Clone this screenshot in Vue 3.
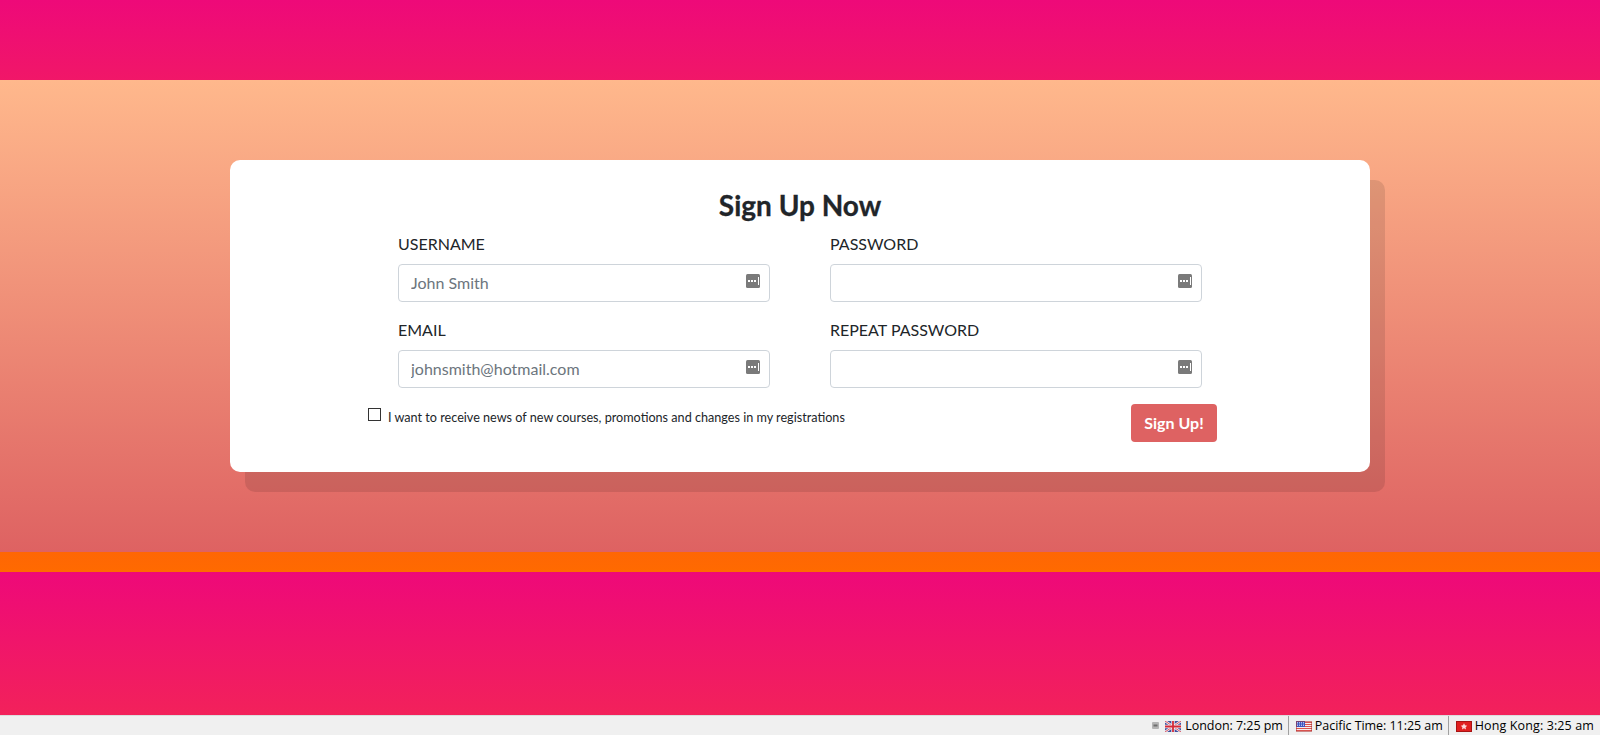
<template>
  <div class="page">
    <section class="hero">
      <form class="card" @submit.prevent>
        <h1 class="title">Sign Up Now</h1>
        <div class="fields">
          <div v-for="field in fields" :key="field.label" class="field">
            <label class="label">{{ field.label }}</label>
            <div class="input-wrap">
              <input class="input" :type="field.type" :placeholder="field.placeholder" />
              <svg class="key-icon" width="14" height="14" viewBox="0 0 14 14">
                <rect width="14" height="14" rx="1.5" fill="#7a7a7a" />
                <rect x="2" y="6" width="2" height="2" fill="#fff" />
                <rect x="5" y="6" width="2" height="2" fill="#fff" />
                <rect x="8" y="6" width="2" height="2" fill="#fff" />
                <rect x="12" y="3" width="1" height="8" fill="#fff" />
              </svg>
            </div>
          </div>
        </div>
        <div class="actions">
          <label class="news">
            <input class="check" type="checkbox" />
            <span>I want to receive news of new courses, promotions and changes in my registrations</span>
          </label>
          <button class="submit" type="submit">Sign Up!</button>
        </div>
      </form>
    </section>
    <footer class="statusbar">
      <svg class="collapse" width="7" height="7" viewBox="0 0 7 7">
        <rect width="7" height="7" rx="1" fill="#b4b4b4" />
        <rect x="1.5" y="2.5" width="4" height="2" fill="#6e6e6e" />
      </svg>
      <div v-for="clock in clocks" :key="clock.name" class="clock" :class="'clock-' + clock.flag">
        <svg v-if="clock.flag === 'uk'" class="flag" width="16" height="11" viewBox="0 0 16 11">
          <rect width="16" height="11" fill="#3f4f9e" />
          <path d="M0 0L16 11M16 0L0 11" stroke="#eeeef4" stroke-width="2.4" />
          <path d="M0 0L16 11M16 0L0 11" stroke="#d8434f" stroke-width="0.9" />
          <path d="M8 0V11M0 5.5H16" stroke="#eeeef4" stroke-width="3.4" />
          <path d="M8 0V11M0 5.5H16" stroke="#d42a38" stroke-width="1.8" />
        </svg>
        <svg v-else-if="clock.flag === 'us'" class="flag" width="16" height="11" viewBox="0 0 16 11">
          <rect width="16" height="11" fill="#f6eeee" />
          <path d="M0 1.5H16M0 3.5H16M0 5.5H16M0 7.5H16M0 9.5H16" stroke="#d9534f" stroke-width="1" />
          <rect width="9" height="6" fill="#3d56c0" />
          <path d="M1 1.5H8M1 3H8M1 4.5H8" stroke="#d5dcf6" stroke-width="0.8" stroke-dasharray="1 1" />
          <rect x="0.5" y="0.5" width="15" height="10" fill="none" stroke="#a33" stroke-opacity="0.55" />
        </svg>
        <svg v-else class="flag" width="16" height="11" viewBox="0 0 16 11">
          <rect width="16" height="11" fill="#e02020" />
          <rect x="0.5" y="0.5" width="15" height="10" fill="none" stroke="#a81414" />
          <path d="M8 2.2L9 4.3L11.2 4.7L9.6 6.2L10 8.4L8 7.3L6 8.4L6.4 6.2L4.8 4.7L7 4.3Z" fill="#fbdada" />
        </svg>
        <span>{{ clock.name }}: {{ clock.time }}</span>
      </div>
    </footer>
  </div>
</template>

<script setup>
const fields = [
  { label: "USERNAME", type: "text", placeholder: "John Smith" },
  { label: "PASSWORD", type: "password", placeholder: "" },
  { label: "EMAIL", type: "email", placeholder: "johnsmith@hotmail.com" },
  { label: "REPEAT PASSWORD", type: "password", placeholder: "" },
];

const clocks = [
  { name: "London", time: "7:25 pm", flag: "uk" },
  { name: "Pacific Time", time: "11:25 am", flag: "us" },
  { name: "Hong Kong", time: "3:25 am", flag: "hk" },
];
</script>

<style scoped>
.page {
  height: 735px;
  box-sizing: border-box;
  padding-top: 80px;
  display: flex;
  flex-direction: column;
  justify-content: space-between;
  font-family: Lato, "Liberation Sans", sans-serif;
  overflow: hidden;
  background: linear-gradient(#ee0979, #ff6a00) 0 0 / 100% 572px repeat-y;
}

.hero {
  height: 472px;
  flex-shrink: 0;
  padding: 80px 230px 0;
  box-sizing: border-box;
  background: linear-gradient(#ffb88c, #de6262);
}

.card {
  height: 312px;
  box-sizing: border-box;
  padding: 28px 168px 0;
  background: #fff;
  border-radius: 10px;
  box-shadow: 15px 20px 0 rgba(0, 0, 0, 0.1);
}

.title {
  margin: 0 0 10px;
  font-size: 28px;
  line-height: 34px;
  font-weight: 700;
  text-align: center;
  color: #212529;
  -webkit-text-stroke: 0.3px #212529;
}

.fields {
  display: grid;
  grid-template-columns: 372px 372px;
  column-gap: 60px;
  row-gap: 16px;
}

.label {
  display: block;
  margin-bottom: 8px;
  font-size: 16px;
  line-height: 24px;
  color: #212529;
}

.input-wrap {
  position: relative;
}

.input {
  display: block;
  width: 100%;
  height: 38px;
  box-sizing: border-box;
  padding: 5px 12px 7px;
  font: 16px/24px Lato, "Liberation Sans", sans-serif;
  color: #495057;
  background: #fff;
  border: 1px solid #ced4da;
  border-radius: 4px;
  outline: none;
}

.input::placeholder {
  color: #6c757d;
  opacity: 1;
}

.key-icon {
  position: absolute;
  top: 10px;
  right: 10px;
}

.actions {
  display: flex;
  justify-content: space-between;
  align-items: flex-start;
  margin: 16px -15px 0 -30px;
}

.news {
  display: flex;
  align-items: flex-start;
  gap: 7px;
  font-size: 12.64px;
  line-height: 20px;
  color: #212529;
}

.check {
  appearance: none;
  width: 13px;
  height: 13px;
  margin: 4px 0 0;
  box-sizing: border-box;
  border: 1px solid #333;
  background: #fff;
}

.news span {
  margin-top: 4px;
}

.submit {
  width: 86px;
  height: 38px;
  padding: 0 0 2px;
  font: 700 16px Lato, "Liberation Sans", sans-serif;
  color: #fff;
  background: #de6262;
  border: none;
  border-radius: 4px;
}

.statusbar {
  height: 20px;
  flex-shrink: 0;
  display: flex;
  justify-content: flex-end;
  align-items: center;
  background: #f0f0f0;
  border-top: 1px solid #dcdcdc;
  box-sizing: border-box;
  font: 12.5px "Open Sans", "DejaVu Sans", sans-serif;
  color: #000;
}

.collapse {
  margin-right: 6px;
}

.clock {
  display: flex;
  align-items: center;
  gap: 4px;
  height: 100%;
  padding-right: 5px;
}

.clock + .clock {
  border-left: 1px solid #a0a0a0;
  padding-left: 7px;
  gap: 3px;
}

.clock span {
  white-space: nowrap;
}

.clock-uk span,
.clock-us span {
  letter-spacing: -0.05px;
}

.clock-hk {
  padding-right: 6px;
}

.clock-hk span {
  letter-spacing: 0.12px;
}

.flag {
  flex-shrink: 0;
  margin-top: 2px;
}
</style>
